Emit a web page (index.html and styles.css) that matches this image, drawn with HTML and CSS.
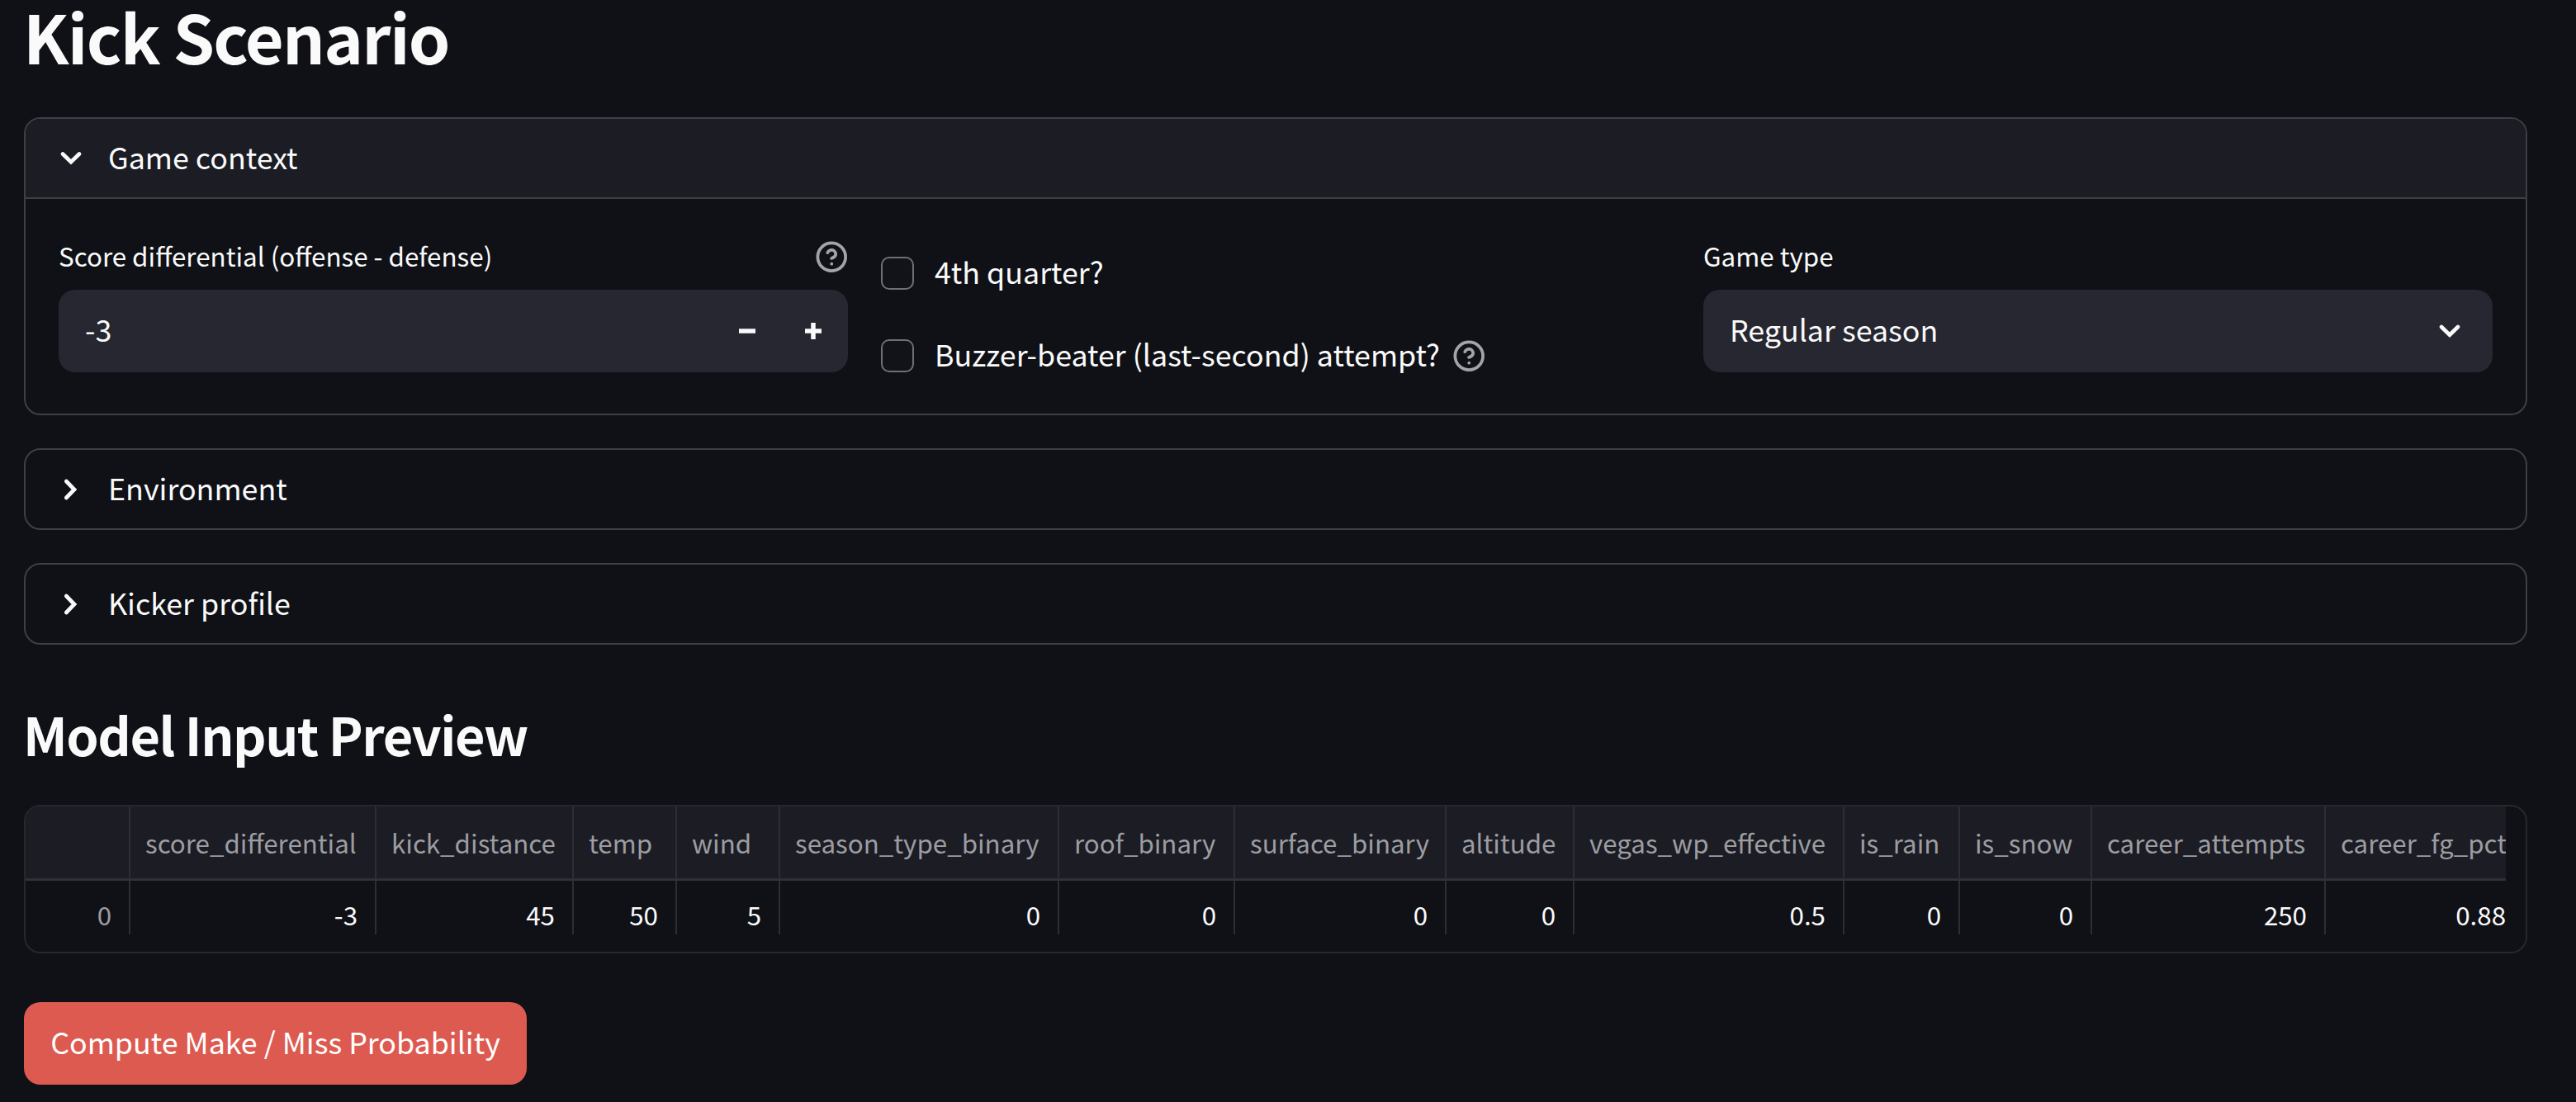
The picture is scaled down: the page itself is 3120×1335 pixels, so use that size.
FILE: index.html
```html
<!DOCTYPE html>
<html lang="en">
<head>
<meta charset="utf-8">
<title>Kick Scenario</title>
<link rel="stylesheet" href="styles.css">
</head>
<body>
<main class="page">
  <h1 class="title">Kick Scenario</h1>

  <div class="panels">
    <section class="panel">
      <div class="panel-head open">
        <svg class="chevron" viewBox="0 0 40 40"><path d="M10 14.5 20 24.3 30 14.5"/></svg>
        <span class="panel-name">Game context</span>
      </div>
      <div class="panel-body">
        <div class="field">
          <div class="label-row">
            <span class="label">Score differential (offense - defense)</span>
            <svg class="help" viewBox="0 0 24 24"><circle cx="12" cy="12" r="10"/><path d="M9.09 9a3 3 0 0 1 5.83 1c0 2-3 3-3 3"/><path d="M12 17h.01"/></svg>
          </div>
          <div class="control">
            <span class="value">-3</span>
            <span class="stepper"><svg class="step" viewBox="0 0 80 100"><path d="M30 50h20"/></svg><svg class="step" viewBox="0 0 80 100"><path d="M30 50h20M40 40v20"/></svg></span>
          </div>
        </div>
        <div class="checks">
          <div class="check"><span class="box"></span><span class="check-label">4th quarter?</span></div>
          <div class="check"><span class="box"></span><span class="check-label">Buzzer-beater (last-second) attempt?</span>
            <svg class="help" viewBox="0 0 24 24"><circle cx="12" cy="12" r="10"/><path d="M9.09 9a3 3 0 0 1 5.83 1c0 2-3 3-3 3"/><path d="M12 17h.01"/></svg></div>
        </div>
        <div class="field">
          <div class="label-row"><span class="label">Game type</span></div>
          <div class="control">
            <span class="value">Regular season</span>
            <svg class="chevron select-chevron" viewBox="0 0 40 40"><path d="M10 15 20 24.8 30 15"/></svg>
          </div>
        </div>
      </div>
    </section>

    <section class="panel">
      <div class="panel-head">
        <svg class="chevron" viewBox="0 0 40 40"><path d="M14.3 10 24 20 14.3 30"/></svg>
        <span class="panel-name">Environment</span>
      </div>
    </section>

    <section class="panel">
      <div class="panel-head">
        <svg class="chevron" viewBox="0 0 40 40"><path d="M14.3 10 24 20 14.3 30"/></svg>
        <span class="panel-name">Kicker profile</span>
      </div>
    </section>
  </div>

  <h2 class="subtitle">Model Input Preview</h2>

  <div class="frame">
    <div class="grid head">
      <span></span><span>score_differential</span><span>kick_distance</span><span>temp</span><span>wind</span><span>season_type_binary</span><span>roof_binary</span><span>surface_binary</span><span>altitude</span><span>vegas_wp_effective</span><span>is_rain</span><span>is_snow</span><span>career_attempts</span><span>career_fg_pct</span>
    </div>
    <div class="grid row">
      <span class="index">0</span><span>-3</span><span>45</span><span>50</span><span>5</span><span>0</span><span>0</span><span>0</span><span>0</span><span>0.5</span><span>0</span><span>0</span><span>250</span><span>0.88</span>
    </div>
  </div>

  <button class="compute" type="button">Compute Make / Miss Probability</button>
</main>
</body>
</html>
```
FILE: styles.css
```css
* { box-sizing: border-box; }

body {
  margin: 0;
  background: #0f1116;
  color: #fafafa;
  font-family: "Noto Sans CJK SC", "Noto Sans", sans-serif;
  font-size: 35.8px;
  overflow: hidden;
}

.page {
  display: flex;
  flex-direction: column;
  align-items: flex-start;
  width: 3061px;
  height: 1335px;
  padding-left: 29px;
}

.title {
  margin: 0 0 56px -1px;
  font-size: 81px;
  line-height: 86px;
  font-weight: 700;
  letter-spacing: -1.75px;
}

.subtitle {
  margin: 70px 0 48px -1px;
  font-size: 63px;
  line-height: 76px;
  font-weight: 700;
  letter-spacing: -1.45px;
}

.panels {
  display: flex;
  flex-direction: column;
  gap: 40px;
  width: 100%;
}

.panel {
  border: 2px solid #3d3f45;
  border-radius: 20px;
  overflow: hidden;
}

.panel-head {
  display: flex;
  align-items: center;
  gap: 25px;
  height: 95px;
  padding-left: 35px;
}

.panel-head.open {
  height: 97px;
  background: #1b1c24;
  border-bottom: 2px solid #3d3f45;
}

.panel-name { line-height: 50px; padding-bottom: 5px; }

.chevron {
  width: 40px;
  height: 40px;
  fill: none;
  stroke: #fafafa;
  stroke-width: 4.7;
  stroke-linecap: round;
}

.panel-body {
  display: grid;
  grid-template-columns: repeat(3, 956px);
  gap: 40px;
  height: 260px;
  padding: 50px 40px 0;
}

.label-row {
  display: flex;
  align-items: center;
  justify-content: space-between;
  height: 40px;
  margin-bottom: 20px;
}

.label { font-size: 31.35px; line-height: 40px; padding-bottom: 3px; }

.help {
  width: 40.5px;
  height: 40.5px;
  fill: none;
  stroke: #a3a4a8;
  stroke-width: 2.2;
  stroke-linecap: round;
  stroke-linejoin: round;
}

.control {
  display: flex;
  align-items: center;
  justify-content: space-between;
  height: 100px;
  padding-left: 32px;
  border-radius: 20px;
  background: #262730;
}

.value { line-height: 50px; padding-bottom: 6px; }

.stepper { display: flex; margin-right: 2px; }

.step {
  width: 80px;
  height: 100px;
  fill: none;
  stroke: #fafafa;
  stroke-width: 5.5;
}

.select-chevron { margin-right: 32px; }

.checks {
  display: flex;
  flex-direction: column;
  gap: 60px;
  padding-top: 20px;
}

.check { display: flex; align-items: center; height: 40px; }

.box {
  width: 40px;
  height: 40px;
  margin-right: 25px;
  border: 2px solid #6f7077;
  border-radius: 10px;
  background: #121319;
}

.check-label { line-height: 50px; padding-bottom: 6px; }
.check .help { margin-left: 15px; }

.frame {
  width: 100%;
  height: 180px;
  border: 2px solid #26282e;
  border-radius: 20px;
  overflow: hidden;
}

.grid {
  display: grid;
  grid-template-columns: 127px 298px 239px 125px 125px 338px 213px 256px 155px 327px 140px 160px 283px 218px;
  width: 3004px;
  overflow: hidden;
  font-size: 31.3px;
  white-space: nowrap;
}

.grid span { border-right: 2px solid #2c2d35; }
.grid span:last-child { border-right: 0; }

.head {
  height: 90px;
  line-height: 87px;
  background: #1b1c24;
  border-bottom: 3px solid #2f3038;
  color: #9c9da1;
}

.head span { padding-left: 18px; }

.row { height: 65px; line-height: 82px; text-align: right; }
.row span { padding-right: 21px; height: 65px; }
.row span:last-child { padding-right: 0; }
.row .index { color: #9c9da1; }

.compute {
  width: 609px;
  height: 100px;
  margin: 59px 0 0;
  padding: 0 0 6px;
  border: 0;
  border-radius: 20px;
  background: #dd5a51;
  color: #fff;
  font: inherit;
}
```
